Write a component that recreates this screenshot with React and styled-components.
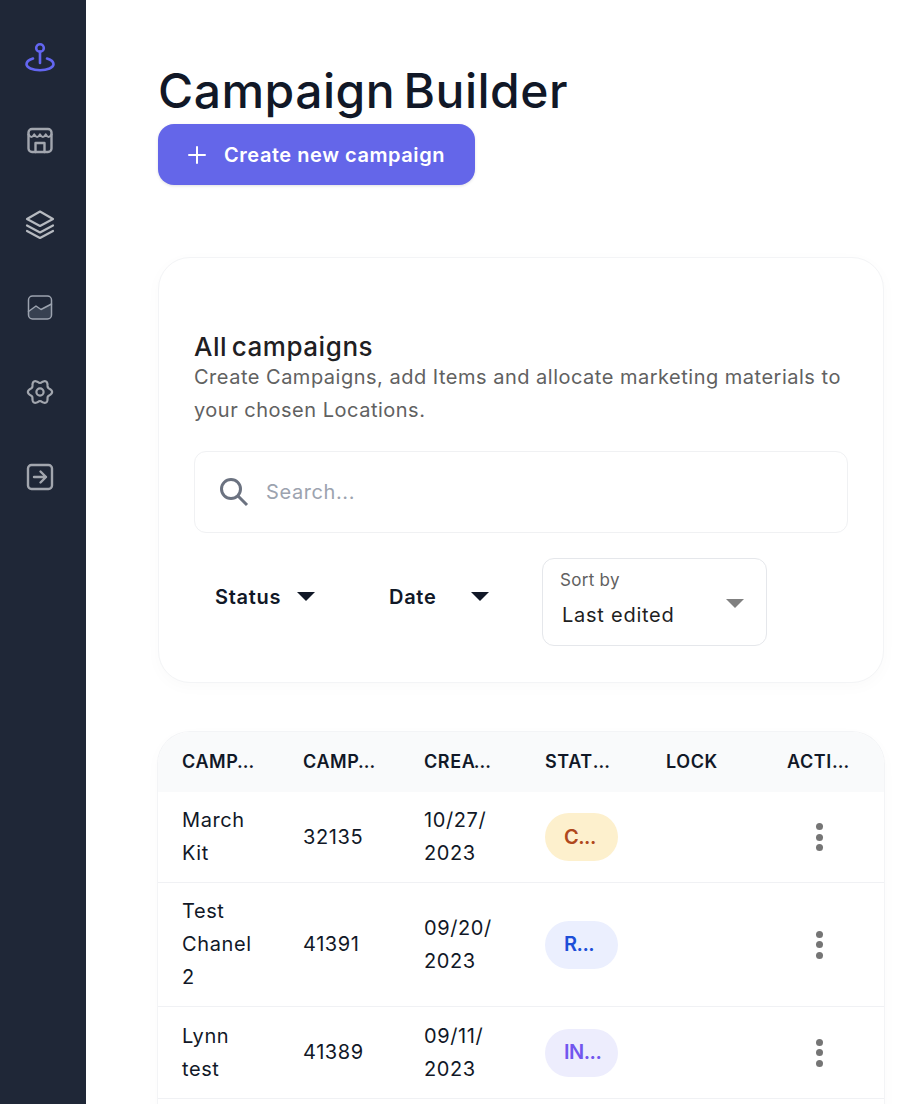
import React from "react";
import styled, { createGlobalStyle } from "styled-components";

const GlobalStyle = createGlobalStyle`
  html, body {
    margin: 0;
    height: 1104px;
    overflow: hidden;
    background: #fff;
    font-family: "Inter", "Liberation Sans", sans-serif;
    color: #111827;
  }
  * { box-sizing: border-box; }
`;

const Page = styled.div`
  display: flex;
  height: 1104px;
  overflow: hidden;
`;

const Sidebar = styled.nav`
  flex: 0 0 86px;
  background: #1f2737;
  display: flex;
  flex-direction: column;
  align-items: center;
  padding: 41px 6px 0 0;
  gap: 49.4px;
`;

const NavIcon = styled.svg`
  width: 34px;
  height: 34px;
  display: block;
  fill: none;
  stroke: ${(p) => (p.$active ? "#6366f1" : "#a2a6ae")};
  stroke-width: 2;
  stroke-linecap: round;
  stroke-linejoin: round;
  &:last-child {
    margin-top: 2px;
  }
`;

const Main = styled.main`
  flex: 1;
  min-width: 0;
  padding: 58px 16px 0 72px;
`;

const Title = styled.h1`
  margin: 0;
  font-size: 48px;
  line-height: 66px;
  font-weight: 500;
  letter-spacing: 0.5px;
  word-spacing: -5px;
  color: #111827;
`;

const PrimaryButton = styled.button`
  display: flex;
  align-items: center;
  gap: 17px;
  width: 317px;
  height: 61px;
  padding: 0 0 0 29px;
  border: none;
  border-radius: 16px;
  background: #6466e9;
  color: #fff;
  font: 600 20px "Inter", sans-serif;
  letter-spacing: 0.55px;
  box-shadow: 0 1px 3px rgba(0, 0, 0, 0.12);
`;

const Card = styled.section`
  margin-top: 72px;
  height: 426px;
  padding: 74px 35px 0;
  background: #fff;
  border: 1px solid #f3f4f6;
  border-radius: 32px;
  box-shadow: 0 4px 16px rgba(0, 0, 0, 0.025);
`;

const CardTitle = styled.h2`
  margin: 0;
  font-size: 26px;
  line-height: 29px;
  font-weight: 500;
  letter-spacing: 0.55px;
  word-spacing: -3px;
  color: #1f2023;
`;

const CardText = styled.p`
  margin: 0;
  font-size: 20px;
  line-height: 33px;
  letter-spacing: 0.5px;
  color: #616161;
`;

const SearchBox = styled.div`
  display: flex;
  align-items: center;
  gap: 15px;
  height: 82px;
  margin-top: 24px;
  padding-left: 22px;
  border: 1px solid #f0f1f3;
  border-radius: 12px;
  color: #9ca3af;
  font-size: 20px;
  letter-spacing: 0.6px;
`;

const Filters = styled.div`
  display: flex;
  align-items: center;
  margin-top: 25px;
`;

const Filter = styled.div`
  display: flex;
  align-items: center;
  justify-content: space-between;
  width: ${(p) => p.$width}px;
  margin: 0 ${(p) => p.$gap}px 11px 21px;
  font-size: 20px;
  font-weight: 600;
  letter-spacing: 0.7px;
  color: #111827;
`;

const Caret = styled.span`
  display: block;
  width: 0;
  height: 0;
  border-left: 9px solid transparent;
  border-right: 9px solid transparent;
  border-top: 9px solid ${(p) => p.$color || "#111827"};
`;

const SortBox = styled.div`
  position: relative;
  width: 225px;
  height: 88px;
  padding: 10px 17px;
  border: 1px solid #e5e7eb;
  border-radius: 12px;
  margin-left: 21px;
`;

const SortLabel = styled.div`
  font-size: 17px;
  line-height: 22px;
  letter-spacing: 0.3px;
  color: #616161;
`;

const SortValue = styled.div`
  margin-top: 10px;
  margin-left: 2px;
  font-size: 20px;
  line-height: 28px;
  letter-spacing: 0.75px;
  color: #1f1f1f;
`;

const SortCaret = styled.span`
  position: absolute;
  right: 22px;
  top: 40px;
`;

const TableWrap = styled.div`
  margin-top: 49px;
  border-radius: 32px 32px 0 0;
  overflow: hidden;
  box-shadow: 0 0 0 1px #f3f4f6, 0 4px 16px rgba(0, 0, 0, 0.025);
`;

const Grid = styled.div`
  display: grid;
  grid-template-columns: repeat(6, 1fr);
  align-items: center;
  min-height: ${(p) => p.$height}px;
  background: ${(p) => (p.$head ? "#f9fafb" : "#fff")};
  border-bottom: ${(p) => (p.$head ? "none" : "1px solid #f0f1f4")};
`;

const HeadCell = styled.div`
  padding: 0 24px 2px 24px;
  font-size: 18px;
  font-weight: 600;
  letter-spacing: 0.6px;
  color: #111827;
  white-space: nowrap;
  overflow: hidden;
  text-overflow: ellipsis;
`;

const Cell = styled.div`
  padding: 0 24px;
  font-size: 20px;
  line-height: 33px;
  letter-spacing: 0.6px;
  color: #111827;
  overflow-wrap: anywhere;
`;

const Badge = styled.div`
  width: 73px;
  height: 48px;
  padding: 0 19px;
  display: flex;
  align-items: center;
  border-radius: 24px;
  background: ${(p) => p.$bg};
  color: ${(p) => p.$color};
  font-size: 20px;
  font-weight: 600;
  letter-spacing: -0.5px;
  white-space: nowrap;
`;

const Dots = styled.div`
  display: flex;
  flex-direction: column;
  align-items: center;
  gap: 3.5px;
  margin-left: -8px;
  span {
    width: 7px;
    height: 7px;
    border-radius: 50%;
    background: #757575;
  }
`;

// six soft lobes, one pointing straight up
const gearPath = () => {
  const pts = [];
  for (let i = 0; i < 120; i++) {
    const a = (i / 120) * Math.PI * 2;
    const r = 10.6 - 1.5 * Math.cos(6 * a);
    pts.push(`${(17 + r * Math.sin(a)).toFixed(2)} ${(17 - r * Math.cos(a)).toFixed(2)}`);
  }
  return `M${pts.join("L")}Z`;
};

const icons = [
  <>
    <circle cx="17" cy="7" r="3.800" strokeWidth="2.600" />
    <path d="M17 10.500V22" strokeWidth="2.600" />
    <path d="M10 17.500C5.500 18.800 3.500 20.800 3.500 23.300c0 3.400 6 5.900 13.500 5.900s13.500-2.500 13.500-5.900c0-2.500-2-4.500-6.500-5.800" strokeWidth="2.600" />
  </>,
  <>
    <rect x="5.500" y="5" width="23" height="23" rx="3.500" strokeWidth="2.400" />
    <path d="M5.500 10.500q2.900 5 5.750 0q2.900 5 5.750 0q2.900 5 5.750 0q2.900 5 5.750 0" strokeWidth="2.200" />
    <path d="M12.500 28v-9h9v9" strokeWidth="2.400" />
  </>,
  <>
    <path d="M17 3.500 30 11 17 18 4 11z" stroke="#b6bac0" strokeWidth="2.200" />
    <path d="M4 17.500l13 7 13-7" stroke="#b6bac0" strokeWidth="2.200" />
    <path d="M4 23l13 7 13-7" stroke="#b6bac0" strokeWidth="2.200" />
  </>,
  <>
    <path d="M5.500 20.500l7.500-5.500 5 3.500 10.500-5.500V24a4 4 0 0 1-4 4H9.500a4 4 0 0 1-4-4z" fill="#374151" stroke="none" />
    <rect x="5.500" y="5" width="23" height="23" rx="4" stroke="#9ca3af" strokeWidth="1.500" />
    <path d="M5.500 20.500l7.500-5.500 5 3.500 10.500-5.500" stroke="#9ca3af" strokeWidth="1.500" />
  </>,
  <>
    <path d={gearPath()} strokeWidth="2.200" />
    <circle cx="17" cy="17" r="3.600" strokeWidth="2.200" />
  </>,
  <>
    <rect x="5" y="5" width="24" height="24" rx="3.500" strokeWidth="2.400" />
    <path d="M11 17h12M17.500 11.500 23 17l-5.500 5.500" strokeWidth="2.400" />
  </>,
];

const rows = [
  { name: "March Kit", id: "32135", date: "10/27/ 2023", badge: "C...", bg: "#fdf0cd", color: "#b0481c", height: 91 },
  { name: "Test Chanel 2", id: "41391", date: "09/20/ 2023", badge: "R...", bg: "#ebeffe", color: "#1d4ed8", height: 124 },
  { name: "Lynn test", id: "41389", date: "09/11/ 2023", badge: "IN...", bg: "#ededfd", color: "#7256ee", height: 92 },
  { name: "Spring Kit", id: "41388", date: "09/08/ 2023", badge: "R...", bg: "#ebeffe", color: "#1d4ed8", height: 92 },
];

const heads = ["CAMPAIGN NAME", "CAMPAIGN ID", "CREATED ON", "STATUS", "LOCK", "ACTIONS"];

export default function App() {
  return (
    <>
      <GlobalStyle />
      <Page>
        <Sidebar>
          {icons.map((icon, i) => (
            <NavIcon key={i} viewBox="0 0 34 34" $active={i === 0}>
              {icon}
            </NavIcon>
          ))}
        </Sidebar>
        <Main>
          <Title>Campaign Builder</Title>
          <PrimaryButton>
            <svg width="20" height="20" viewBox="0 0 20 20" stroke="#fff" strokeWidth="2" strokeLinecap="round">
              <path d="M10 2v16M2 10h16" />
            </svg>
            Create new campaign
          </PrimaryButton>
          <Card>
            <CardTitle>All campaigns</CardTitle>
            <CardText>
              Create Campaigns, add Items and allocate marketing materials to your chosen Locations.
            </CardText>
            <SearchBox>
              <svg width="34" height="34" viewBox="0 0 34 34" fill="none" stroke="#6b7280" strokeWidth="3">
                <circle cx="14" cy="14" r="9.500" />
                <path d="M21 21l9 9" />
              </svg>
              Search...
            </SearchBox>
            <Filters>
              <Filter $width={100} $gap={53}>
                Status <Caret />
              </Filter>
              <Filter $width={100} $gap={32}>
                Date <Caret />
              </Filter>
              <SortBox>
                <SortLabel>Sort by</SortLabel>
                <SortValue>Last edited</SortValue>
                <SortCaret>
                  <Caret $color="#808080" />
                </SortCaret>
              </SortBox>
            </Filters>
          </Card>
          <TableWrap>
            <Grid $head $height={60}>
              {heads.map((h) => (
                <HeadCell key={h}>{h}</HeadCell>
              ))}
            </Grid>
            {rows.map((r) => (
              <Grid key={r.id} $height={r.height}>
                <Cell>{r.name}</Cell>
                <Cell>{r.id}</Cell>
                <Cell>{r.date}</Cell>
                <Cell>
                  <Badge $bg={r.bg} $color={r.color}>{r.badge}</Badge>
                </Cell>
                <Cell />
                <Cell>
                  <Dots><span /><span /><span /></Dots>
                </Cell>
              </Grid>
            ))}
          </TableWrap>
        </Main>
      </Page>
    </>
  );
}
